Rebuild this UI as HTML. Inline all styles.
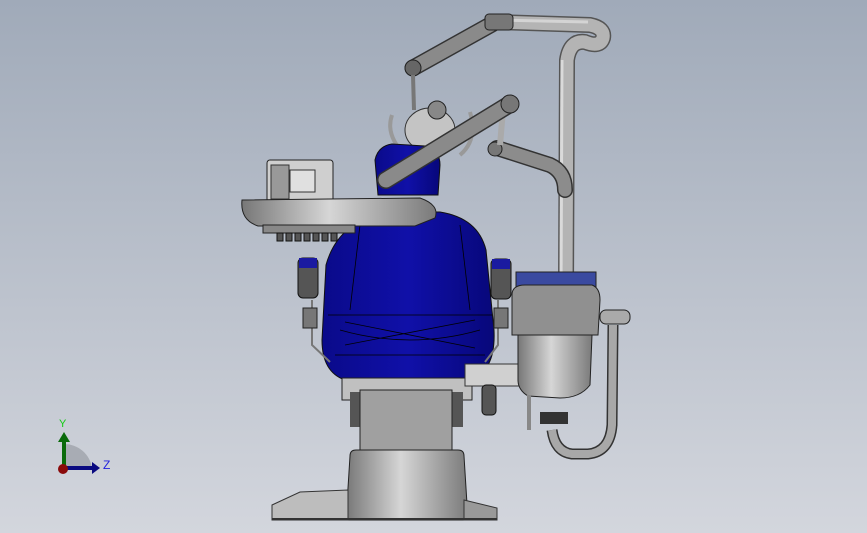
<!DOCTYPE html>
<html><head><meta charset="utf-8"><style>
html,body{margin:0;padding:0;width:867px;height:533px;overflow:hidden}
svg{display:block}
</style></head><body>
<svg width="867" height="533" viewBox="0 0 867 533" xmlns="http://www.w3.org/2000/svg" font-family="Liberation Sans, sans-serif">
<defs>
<linearGradient id="bg" x1="0" y1="0" x2="0" y2="1"><stop offset="0" stop-color="#a0aab9"/><stop offset="1" stop-color="#d3d6dd"/></linearGradient>
<linearGradient id="blue" x1="0" y1="0" x2="1" y2="0"><stop offset="0" stop-color="#0a0a8a"/><stop offset=".5" stop-color="#1010a8"/><stop offset="1" stop-color="#07077a"/></linearGradient>
<linearGradient id="metal" x1="0" y1="0" x2="1" y2="0"><stop offset="0" stop-color="#777"/><stop offset=".45" stop-color="#d6d6d6"/><stop offset="1" stop-color="#7a7a7a"/></linearGradient>
</defs>
<rect width="867" height="533" fill="url(#bg)"/>

<path d="M495 22 L590 25 Q605 28 603 38 Q600 48 585 42 Q570 40 567 60 L566 290" fill="none" stroke="#555" stroke-width="16" stroke-linecap="round"/>
<path d="M495 22 L590 25 Q605 28 603 38 Q600 48 585 42 Q570 40 567 60 L566 290" fill="none" stroke="#b4b4b4" stroke-width="13" stroke-linecap="round"/>
<path d="M495 20 L588 22" stroke="#d4d4d4" stroke-width="3" fill="none"/>
<path d="M562 60 L561 290" stroke="#dadada" stroke-width="3" fill="none"/>
<line x1="492" y1="24" x2="413" y2="68" stroke="#333" stroke-width="17" stroke-linecap="round"/>
<line x1="492" y1="24" x2="413" y2="68" stroke="#8a8a8a" stroke-width="14" stroke-linecap="round"/>
<rect x="485" y="14" width="28" height="16" rx="4" fill="#777" stroke="#222"/>
<circle cx="413" cy="68" r="8" fill="#666" stroke="#222"/>
<line x1="413" y1="75" x2="414" y2="110" stroke="#777" stroke-width="4"/>
<ellipse cx="430" cy="130" rx="25" ry="22" fill="#c4c4c4" stroke="#333"/>
<circle cx="437" cy="110" r="9" fill="#888" stroke="#222"/>
<path d="M392 115 Q385 135 405 155 M470 112 Q478 140 460 155" stroke="#999" stroke-width="4" fill="none"/>
<path d="M497 148 L550 165 Q565 172 565 190" stroke="#333" stroke-width="16" fill="none" stroke-linecap="round"/>
<path d="M497 148 L550 165 Q565 172 565 190" stroke="#8c8c8c" stroke-width="13" fill="none" stroke-linecap="round"/>
<circle cx="495" cy="149" r="7" fill="#777" stroke="#222"/>
<line x1="503" y1="110" x2="500" y2="145" stroke="#aaa" stroke-width="6"/>

<path d="M378 195 L375 160 Q378 146 392 144 L425 146 Q440 150 440 165 L438 195 Z" fill="url(#blue)" stroke="#111"/>
<line x1="510" y1="104" x2="386" y2="180" stroke="#333" stroke-width="18" stroke-linecap="round"/>
<line x1="510" y1="104" x2="386" y2="180" stroke="#8a8a8a" stroke-width="15" stroke-linecap="round"/>
<circle cx="510" cy="104" r="9" fill="#777" stroke="#222"/>

<path d="M326 265 Q340 215 400 212 L440 212 Q478 218 486 250 L494 330 Q496 372 470 378 L345 380 Q322 372 322 340 Z" fill="url(#blue)" stroke="#111"/>
<path d="M328 315 L492 315 M340 330 Q410 350 480 330 M345 345 L475 320 M345 322 L475 348 M360 225 L350 310 M460 225 L470 310 M335 355 L485 355" stroke="#000" stroke-width="0.8" fill="none"/>
<rect x="298" y="258" width="20" height="40" rx="5" fill="#555" stroke="#111"/>
<rect x="299" y="258" width="18" height="10" fill="#1a1aa0"/>
<rect x="491" y="259" width="20" height="40" rx="5" fill="#555" stroke="#111"/>
<rect x="492" y="259" width="18" height="10" fill="#1a1aa0"/>
<path d="M312 300 L312 345 L330 362 M498 300 L498 345 L485 362" stroke="#777" stroke-width="2" fill="none"/>
<rect x="303" y="308" width="14" height="20" fill="#777" stroke="#222"/>
<rect x="494" y="308" width="14" height="20" fill="#777" stroke="#222"/>

<rect x="267" y="160" width="66" height="42" rx="3" fill="#cfcfcf" stroke="#222"/>
<rect x="271" y="165" width="18" height="34" fill="#999" stroke="#333"/>
<rect x="290" y="170" width="25" height="22" fill="#e0e0e0" stroke="#333"/>
<path d="M242 200 L420 198 Q440 205 435 218 L415 226 L258 226 Q240 220 242 200 Z" fill="url(#metal)" stroke="#222"/>
<rect x="263" y="225" width="92" height="8" fill="#888" stroke="#222"/>
<g fill="#555" stroke="#111">
<rect x="277" y="233" width="6" height="8"/><rect x="286" y="233" width="6" height="8"/><rect x="295" y="233" width="6" height="8"/><rect x="304" y="233" width="6" height="8"/><rect x="313" y="233" width="6" height="8"/><rect x="322" y="233" width="6" height="8"/><rect x="331" y="233" width="6" height="8"/>
</g>

<rect x="342" y="378" width="130" height="22" fill="#c0c0c0" stroke="#222"/>
<rect x="350" y="392" width="15" height="35" fill="#555"/>
<rect x="448" y="392" width="15" height="35" fill="#555"/>
<rect x="360" y="390" width="92" height="60" fill="#a0a0a0" stroke="#222"/>
<path d="M350 456 Q350 450 356 450 L458 450 Q464 450 464 456 L468 520 L346 520 Z" fill="url(#metal)" stroke="#222"/>
<path d="M272 505 L300 492 L348 490 L348 520 L272 520 Z" fill="#bdbdbd" stroke="#333"/>
<path d="M464 500 L497 508 L497 520 L464 520 Z" fill="#999" stroke="#333"/>
<line x1="272" y1="519" x2="497" y2="519" stroke="#333" stroke-width="2"/>
<rect x="465" y="364" width="60" height="22" fill="#d0d0d0" stroke="#333"/>
<rect x="482" y="385" width="14" height="30" rx="4" fill="#555" stroke="#111"/>

<rect x="516" y="272" width="80" height="20" fill="#3a4aa0" stroke="#222"/>
<path d="M512 295 Q512 285 525 285 L592 285 Q600 288 600 300 L598 335 L512 335 Z" fill="#909090" stroke="#222"/>
<path d="M518 335 L592 335 L590 385 Q580 398 560 398 L528 396 Q518 390 518 380 Z" fill="url(#metal)" stroke="#222"/>
<rect x="600" y="310" width="30" height="14" rx="6" fill="#aaa" stroke="#222"/>
<path d="M613 325 L612 425 Q610 452 588 454 L572 454 Q555 452 552 430" stroke="#333" stroke-width="11" fill="none"/>
<path d="M613 325 L612 425 Q610 452 588 454 L572 454 Q555 452 552 430" stroke="#a8a8a8" stroke-width="8" fill="none"/>
<rect x="540" y="412" width="28" height="12" fill="#333"/>
<rect x="527" y="395" width="4" height="35" fill="#888"/>

<path d="M64 468 L64 444 A28 28 0 0 1 92 468 Z" fill="#a8acb4"/>
<line x1="64" y1="468" x2="64" y2="440" stroke="#0a6a0a" stroke-width="4"/>
<path d="M58 442 L64 432 L70 442 Z" fill="#0a6a0a"/>
<line x1="64" y1="468" x2="92" y2="468" stroke="#0a0a80" stroke-width="4"/>
<path d="M92 462 L100 468 L92 474 Z" fill="#0a0a80"/>
<circle cx="63" cy="469" r="5" fill="#8a0a0a"/>
<text x="59" y="427" font-size="11" fill="#1c1">Y</text>
<text x="103" y="469" font-size="12" fill="#22d">Z</text>
</svg>
</body></html>
